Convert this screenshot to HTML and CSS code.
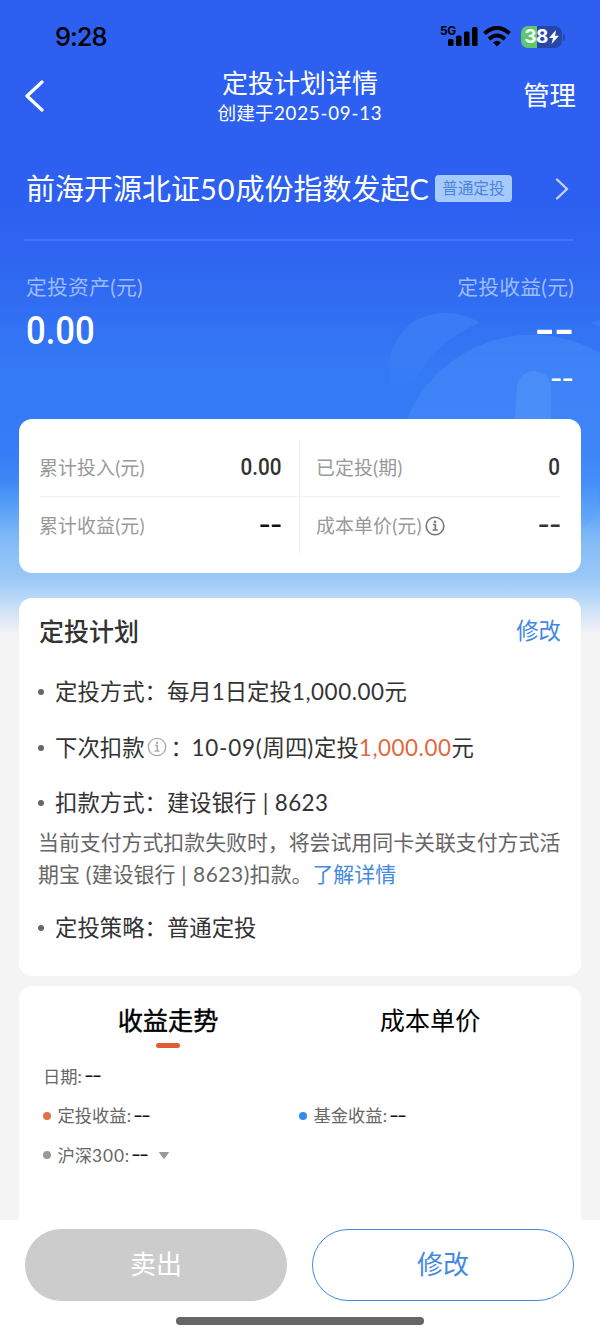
FILE: index.html
```html
<!DOCTYPE html>
<html lang="zh-CN">
<head>
<meta charset="utf-8">
<title>定投计划详情</title>
<link rel="stylesheet" href="styles.css">
</head>
<body>
<div class="screen">
  <svg class="watermark" width="220" height="240" viewBox="380 300 220 240">
    <defs>
      <linearGradient id="ear" x1="0" y1="0" x2="0" y2="1">
        <stop offset="0" stop-color="#5aa0ff" stop-opacity=".25"/>
        <stop offset="1" stop-color="#5aa0ff" stop-opacity="0"/>
      </linearGradient>
    </defs>
    <path d="M480 323C451 305 414 312 398 338C385 358 388 382 398 396C407 396 412 389 417 377C430 354 452 334 480 323Z" fill="url(#ear)"/>
    <path d="M590 323L600 319V327Z" fill="#5aa0ff" fill-opacity=".2"/>
    <path d="M407 419A135 135 0 0 1 600 353V480Q598 528 578 528H407Z" fill="#5aa0ff" fill-opacity=".27"/>
    <path d="M514 430L517 387C518 366 550 366 551 387V430Z" fill="#6eaaff" fill-opacity=".25"/>
  </svg>

  <div class="statusbar">
    <span class="clock">9:28</span>
    <div class="status-icons">
      <span class="net">5G</span>
      <svg class="signal" width="30" height="20" viewBox="0 0 30 20"><rect x="0" y="12" width="5.500" height="7" rx="1.500"/><rect x="8" y="8.500" width="5.500" height="10.500" rx="1.500"/><rect x="16" y="4.500" width="5.500" height="14.500" rx="1.500"/><rect x="24" y="0" width="5.500" height="19" rx="1.500"/></svg>
      <svg class="wifi" width="28" height="21" viewBox="0 0 28 21" fill="none" stroke="#000" stroke-width="4"><path d="M1.500 7.500Q14-3.500 26.500 7.500"/><path d="M6 13Q14 6 22 13"/><path d="M14 20.500L10 16.500Q14 13.200 18 16.500Z" fill="#000" stroke="none"/></svg>
      <div class="battery"><span>38</span><svg width="10" height="14" viewBox="0 0 10 14"><path d="M7 0L0 8H4L2.500 14L10 5.700H6Z" fill="#fff"/></svg></div>
      <i class="battery-tip"></i>
    </div>
  </div>

  <div class="navbar">
    <svg class="back" width="20" height="32" viewBox="0 0 20 32" fill="none" stroke="#fff" stroke-width="3.200" stroke-linecap="round" stroke-linejoin="round"><path d="M17 2L2 16L17 30"/></svg>
    <div class="heading"><h1>定投计划详情</h1><p>创建于<em>2025-09-13</em></p></div>
    <span class="manage">管理</span>
  </div>

  <div class="fund">
    <span class="fund-name">前海开源北证<em>50</em>成份指数发起C</span>
    <span class="tag">普通定投</span>
    <svg class="more" width="14" height="22" viewBox="0 0 14 22" fill="none" stroke="#c3d3fb" stroke-width="2.400" stroke-linecap="round" stroke-linejoin="round"><path d="M2 1.500L12 11L2 20.500"/></svg>
  </div>

  <div class="assets">
    <div class="row labels"><span>定投资产(元)</span><span>定投收益(元)</span></div>
    <div class="row amount"><span class="num">0.00</span><span class="dash big">--</span></div>
    <div class="row rate"><span class="dash mid">--</span></div>
  </div>

  <div class="card stats">
    <div class="cell left top"><span>累计投入(元)</span><b class="num">0.00</b></div>
    <div class="cell right top"><span>已定投(期)</span><b class="num">0</b></div>
    <div class="cell left"><span>累计收益(元)</span><b class="dash">--</b></div>
    <div class="cell right"><span>成本单价(元)</span><svg class="info" width="20" height="20" viewBox="0 0 20 20"><circle cx="10" cy="10" r="8.800" fill="none" stroke="#777" stroke-width="1.600"/><circle cx="10" cy="5.700" r="1.300" fill="#777"/><path d="M8 8.500H10.300V14M7.500 14H12.800" fill="none" stroke="#777" stroke-width="1.700"/></svg><b class="dash dark">--</b></div>
  </div>

  <div class="card plan">
    <div class="plan-head"><h2>定投计划</h2><a>修改</a></div>
    <div class="item"><i></i><span>定投方式：每月1日定投<em>1,000.00</em>元</span></div>
    <div class="item"><i></i><span>下次扣款</span><svg class="info-s" width="20" height="20" viewBox="0 0 20 20"><circle cx="10" cy="10" r="8.700" fill="none" stroke="#aaa" stroke-width="1.300"/><circle cx="10" cy="5.800" r="1.200" fill="#aaa"/><path d="M8 8.500H10.300V14M7.500 14H12.500" fill="none" stroke="#aaa" stroke-width="1.500"/></svg><span class="colon">：</span><span><em class="day">10-09(</em>周四<em class="day">)</em>定投<em class="orange">1,000.00</em>元</span></div>
    <div class="item"><i></i><span>扣款方式：建设银行<em class="bank"> | 8623</em></span></div>
    <div class="note"><div>当前支付方式扣款失败时，将尝试用同卡关联支付方式活</div><div>期宝<em> (</em>建设银行<em> | 8623)</em>扣款。<a>了解详情</a></div></div>
    <div class="item last"><i></i><span>定投策略：普通定投</span></div>
  </div>

  <div class="card trend">
    <div class="tabs"><span class="tab active">收益走势</span><span class="tab">成本单价</span></div>
    <div class="legend date"><span>日期:</span><b>--</b></div>
    <div class="legend"><div class="half"><i class="c1"></i><span>定投收益:</span><b>--</b></div><div class="half"><i class="c2"></i><span>基金收益:</span><b>--</b></div></div>
    <div class="legend"><i class="c3"></i><span>沪深<em>300</em>:</span><b>--</b><svg class="caret" width="10" height="7" viewBox="0 0 10 7"><path d="M0.500 .5H9.500L5 6.500Z" fill="#999" stroke="#999" stroke-linejoin="round"/></svg></div>
  </div>

  <div class="footer">
    <div class="buttons"><span class="btn sell">卖出</span><span class="btn edit">修改</span></div>
    <div class="home"></div>
  </div>
</div>
</body>
</html>
```
FILE: styles.css
```css
* { box-sizing: border-box; margin: 0; padding: 0; }
body { font-family: Lato, "Noto Sans CJK SC", sans-serif; background: #fff; }
i, em { font-style: normal; }
span, b, h1, h2, p, a { white-space: nowrap; }
.screen {
  position: relative; width: 600px; height: 1335px; overflow: hidden;
  display: flex; flex-direction: column;
  background: linear-gradient(180deg, #2d60f0 0, #2d60f0 200px, #2f68f1 280px, #3478f5 360px, #367cf6 450px, #3d87f6 480px, #509af6 500px, #82bbf7 540px, #9cc9f6 580px, #bcdaf8 600px, #dfe9f7 620px, #f4f4f4 635px);
}
.watermark { position: absolute; left: 380px; top: 300px; }
.screen > div { position: relative; flex: none; }

.statusbar { height: 60px; padding: 14px 35px 0 55px; display: flex; justify-content: space-between; align-items: flex-start; color: #000; }
.clock { font: 500 25.500px/46px Inter, sans-serif; letter-spacing: -1px; }
.status-icons { display: flex; align-items: flex-start; padding-top: 12px; }
.net { font: 700 12px/12px Inter, sans-serif; width: 8px; letter-spacing: -.3px; margin-top: -1px; }
.signal { margin-top: 1px; }
.wifi { margin: 0 10px 0 5px; }
.battery { width: 41px; height: 22px; border-radius: 7px; background: linear-gradient(90deg, #60c66d 16px, #2647a8 16px); display: flex; align-items: center; justify-content: center; gap: 1px; color: #fff; }
.battery span { font: 700 19px/22px Inter, sans-serif; letter-spacing: -.5px; }
.battery-tip { width: 2px; height: 7px; margin: 8px 0 0 1px; border-radius: 0 2px 2px 0; background: #2647a8; }

.navbar { height: 88px; padding: 0 24px 0 25px; display: grid; grid-template-columns: 100px 1fr 101px; color: #fff; }
.back { margin-top: 20px; }
.heading { text-align: center; padding-top: 5px; }
.heading h1 { font-size: 26px; line-height: 36px; font-weight: 400; }
.heading p { font-size: 18.700px; line-height: 24px; letter-spacing: .1px; }
.heading em { letter-spacing: .8px; }
.manage { font-size: 26.400px; line-height: 70px; text-align: right; }

.fund { height: 93px; margin: 0 26px 0 24px; padding: 20px 5px 0 2px; border-bottom: 2px solid #4272f3; display: flex; align-items: flex-start; color: #fff; }
.fund-name { font-size: 29px; line-height: 42px; }
.fund-name em { letter-spacing: .9px; }
.tag { width: 77px; height: 27px; margin: 7px 0 0 6px; border-radius: 4px; background: #a6cbfb; color: #4e83dd; font-size: 15.700px; line-height: 26px; text-align: center; }
.more { margin: 10px 0 0 auto; }

.assets { height: 178px; padding: 29px 26px 0; color: #fff; }
.row { display: flex; justify-content: space-between; align-items: center; }
.labels { height: 32px; color: #9dbcf9; font-size: 20.800px; letter-spacing: .25px; }
.amount { height: 58px; }
.amount .num { font: 500 39px/46px Roboto, sans-serif; transform: scaleX(.89); transform-origin: left; }
.rate { height: 40px; justify-content: flex-end; }
.dash { font-family: Roboto, sans-serif; font-weight: 500; }
.big { font-size: 44px; line-height: 46px; margin-top: -3px; transform: scaleX(1.3); transform-origin: right; }
.mid { font-size: 27px; line-height: 30px; margin-top: -2px; margin-right: 1px; transform: scaleX(1.25); transform-origin: right; }

.card { background: #fff; border-radius: 13px; margin: 0 19.500px 0 19px; }
.stats { height: 154px; padding: 20px 20px; display: grid; grid-template-columns: 261px 1fr; grid-template-rows: 58px 57px; }
.cell { display: flex; align-items: center; color: #999; font-size: 18.900px; letter-spacing: .15px; }
.cell span { margin-top: -2px; }
.cell.left { border-right: 1px solid #f2f2f2; padding-right: 17px; }
.cell.right { padding-left: 16px; }
.cell.top { border-bottom: 1px solid #f2f2f2; }
.cell b { margin-left: auto; color: #333; font: 500 23px/28px Roboto, sans-serif; letter-spacing: 0; transform: scaleX(.9); transform-origin: right; }
.cell b.dash { color: #111; transform: scaleX(1.35); font-size: 25px; }
.cell b.dark { color: #333; }
.info { margin-left: 3px; }

.plan { height: 378px; margin-top: 25px; padding: 13px 19.500px 0 20px; color: #333; }
.plan-head { display: flex; justify-content: space-between; height: 42px; line-height: 40px; }
.plan-head h2 { font-size: 25px; font-weight: 500; }
a { color: #4389e0; }
.plan-head a { font-size: 22.400px; }
.item { height: 33px; margin-top: 22.600px; display: flex; align-items: center; font-size: 22.400px; line-height: 33px; }
.item span { margin-top: -1px; }
.item i { width: 6px; height: 6px; border-radius: 50%; background: #666; margin: 0 11px 0 -1px; }
.item em { letter-spacing: .55px; }
.item .day { letter-spacing: .8px; }
.item .bank { letter-spacing: .4px; }
.item .orange { color: #df6840; }
.info-s { margin-left: 2px; margin-top: -2px; }
.colon { margin: 0 -1.500px 0 4px; }
.note { color: #666; font-size: 20.900px; line-height: 31.500px; margin-top: 6.500px; margin-left: -1px; }
.note div { height: 31.500px; white-space: nowrap; }
.note em { letter-spacing: .55px; }
.last { margin-top: 22.500px; }

.trend { height: 234px; margin-top: 10px; border-radius: 13px 13px 0 0; color: #000; }
.tabs { display: flex; padding: 0 19px 0 18px; height: 70px; }
.tab { width: 262px; text-align: center; font-size: 25.200px; line-height: 69px; position: relative; }
.active { -webkit-text-stroke: .4px #000; }
.active::after { content: ""; position: absolute; left: 119px; top: 57px; width: 24px; height: 5px; border-radius: 3px; background: #df5c35; }
.legend { height: 39.500px; padding-left: 24px; display: flex; align-items: center; font-size: 17.300px; color: #666; }
.legend span { margin-top: -2px; }
.legend em { letter-spacing: .9px; }
.date { height: 40px; }
.legend b { font: 400 20px/24px Roboto, sans-serif; color: #111; margin-top: -2px; transform: scaleX(1.45); transform-origin: left; margin-left: 3px; }
.legend i { width: 8px; height: 8px; border-radius: 50%; margin-right: 6.500px; }
.half { width: 256px; display: flex; align-items: center; }
.c1 { background: #df7247; }
.c2 { background: #378aeb; }
.c3 { background: #999; }
.caret { margin-left: 16px; }

.footer { height: 115px; background: #fff; padding: 9px 26px 0 25px; }
.buttons { display: flex; justify-content: space-between; }
.btn { width: 262px; height: 72px; border-radius: 36px; font-size: 26px; line-height: 71px; text-align: center; }
.sell { background: #ccc; color: #fff; }
.edit { border: 1px solid #4389e0; color: #4389e0; line-height: 69px; }
.home { width: 248px; height: 8px; border-radius: 4px; background: #666; margin: 16px 0 0 151px; }
```
